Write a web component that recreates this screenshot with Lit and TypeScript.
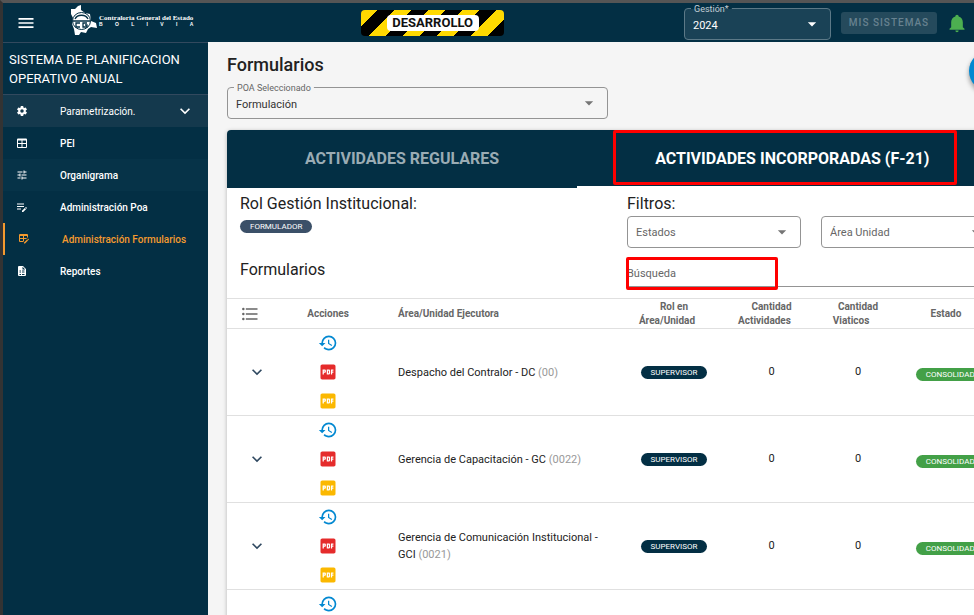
import { LitElement, html, css, svg } from "lit";
import { customElement } from "lit/decorators.js";
import { classMap } from "lit/directives/class-map.js";

const ICONS: Record<string, string> = {
  menu: "M3 6H21V8H3V6M3 11H21V13H3V11M3 16H21V18H3V16Z",
  cog: "M12,15.5A3.5,3.5 0 0,1 8.5,12A3.5,3.5 0 0,1 12,8.5A3.5,3.5 0 0,1 15.5,12A3.5,3.5 0 0,1 12,15.5M19.43,12.97C19.47,12.65 19.5,12.33 19.5,12C19.5,11.67 19.47,11.34 19.43,11L21.54,9.37C21.73,9.22 21.78,8.95 21.66,8.73L19.66,5.27C19.54,5.05 19.27,4.96 19.05,5.05L16.56,6.05C16.04,5.66 15.5,5.32 14.87,5.07L14.5,2.42C14.46,2.18 14.25,2 14,2H10C9.75,2 9.54,2.18 9.5,2.42L9.13,5.07C8.5,5.32 7.96,5.66 7.44,6.05L4.95,5.05C4.73,4.96 4.46,5.05 4.34,5.27L2.34,8.73C2.21,8.95 2.27,9.22 2.46,9.37L4.57,11C4.53,11.34 4.5,11.67 4.5,12C4.5,12.33 4.53,12.65 4.57,12.97L2.46,14.63C2.27,14.78 2.21,15.05 2.34,15.27L4.34,18.73C4.46,18.95 4.73,19.03 4.95,18.95L7.44,17.94C7.96,18.34 8.5,18.68 9.13,18.93L9.5,21.58C9.54,21.82 9.75,22 10,22H14C14.25,22 14.46,21.82 14.5,21.58L14.87,18.93C15.5,18.67 16.04,18.34 16.56,17.94L19.05,18.95C19.27,19.03 19.54,18.95 19.66,18.73L21.66,15.27C21.78,15.05 21.73,14.78 21.54,14.63L19.43,12.97Z",
  table: "M4,3H20A2,2 0 0,1 22,5V20A2,2 0 0,1 20,22H4A2,2 0 0,1 2,20V5A2,2 0 0,1 4,3M4,7V12H11V7H4M13,7V12H20V7H13M4,14V20H11V14H4M13,14V20H20V14H13Z",
  tune: "M3,17V19H9V17H3M3,5V7H13V5H3M13,21V19H21V17H13V15H11V21H13M7,9V11H3V13H7V15H9V9H7M21,13V11H11V13H21M15,9H17V7H21V5H17V3H15V9Z",
  textEdit: "M2,5H16V7H2V5M2,10H16V12H2V10M2,15H10V17H2V15M21.7,13.6L20.4,12.3A0.8,0.8 0 0,0 19.3,12.3L18.3,13.3L20.7,15.7L21.7,14.7A0.8,0.8 0 0,0 21.7,13.6M12,19.6V22H14.4L20,16.3L17.6,13.9L12,19.6Z",
  tableEdit: "M21.7,13.35L20.7,14.35L18.65,12.3L19.65,11.3C19.86,11.08 20.21,11.08 20.42,11.3L21.7,12.58C21.92,12.79 21.92,13.14 21.7,13.35M12,18.94L18.07,12.88L20.12,14.93L14.06,21H12V18.94M4,2H18A2,2 0 0,1 20,4V8.17L16.17,12H12V16.17L10.17,18H4A2,2 0 0,1 2,16V4A2,2 0 0,1 4,2M4,6V10H10V6H4M12,6V10H18V6H12M4,12V16H10V12H4Z",
  fileTable: "M14,2H6A2,2 0 0,0 4,4V20A2,2 0 0,0 6,22H18A2,2 0 0,0 20,20V8L14,2M13,3.5L18.5,9H13V3.5M7,11H10V13H7V11M12,11H17V13H12V11M7,15H10V16H7V15M12,15H17V16H12V15M7,18H10V20H7V18M12,18H17V20H12V18Z",
  chevron: "M7.41,8.58L12,13.17L16.59,8.58L18,10L12,16L6,10L7.41,8.58Z",
  list: "M7,5H21V7H7V5M7,13V11H21V13H7M4,4.5A1.5,1.5 0 0,1 5.5,6A1.5,1.5 0 0,1 4,7.5A1.5,1.5 0 0,1 2.5,6A1.5,1.5 0 0,1 4,4.5M4,10.5A1.5,1.5 0 0,1 5.5,12A1.5,1.5 0 0,1 4,13.5A1.5,1.5 0 0,1 2.5,12A1.5,1.5 0 0,1 4,10.5M7,19V17H21V19H7M4,16.5A1.5,1.5 0 0,1 5.5,18A1.5,1.5 0 0,1 4,19.5A1.5,1.5 0 0,1 2.5,18A1.5,1.5 0 0,1 4,16.5Z",
  history: "M13.5,8H12V13L16.28,15.54L17,14.33L13.5,12.25V8M13,3A9,9 0 0,0 4,12H1L4.96,16.03L9,12H6A7,7 0 0,1 13,5A7,7 0 0,1 20,12A7,7 0 0,1 13,19C11.07,19 9.32,18.21 8.06,16.94L6.64,18.36C8.27,20 10.5,21 13,21A9,9 0 0,0 22,12A9,9 0 0,0 13,3",
  pdf: "M19 3H5C3.9 3 3 3.9 3 5V19C3 20.1 3.9 21 5 21H19C20.1 21 21 20.1 21 19V5C21 3.9 20.1 3 19 3M9.5 11.5C9.5 12.3 8.8 13 8 13H7V15H5.5V9H8C8.8 9 9.5 9.7 9.5 10.5V11.5M14.5 13.5C14.5 14.3 13.8 15 13 15H10.5V9H13C13.8 9 14.5 9.7 14.5 10.5V13.5M18.5 10.5H17V11.5H18.5V13H17V15H15.5V9H18.5V10.5M12 10.5H13V13.5H12V10.5M7 10.5H8V11.5H7V10.5Z",
  bell: "M21,19V20H3V19L5,17V11C5,7.9 7.03,5.17 10,4.29C10,4.19 10,4.1 10,4A2,2 0 0,1 12,2A2,2 0 0,1 14,4C14,4.1 14,4.19 14,4.29C16.97,5.17 19,7.9 19,11V17L21,19M14,21A2,2 0 0,1 12,23A2,2 0 0,1 10,21",
  caret: "M7,10L12,15L17,10H7Z",
};

const icon = (name: string, size: number) => html`<svg
  width=${size} height=${size} viewBox="0 0 24 24" fill="currentColor" aria-hidden="true"
>${svg`<path d=${ICONS[name]}></path>`}</svg>`;

const base = css`
  *, *::before, *::after { box-sizing: border-box; }
  svg { display: block; flex: none; }
  button, select, input { font: inherit; color: inherit; margin: 0; }
  button { background: none; border: 0; padding: 0; cursor: pointer; }
`;

@customElement("select-field")
class SelectField extends LitElement {
  static properties = {
    label: { type: String },
    value: { type: String },
    dark: { type: Boolean, reflect: true },
  };
  declare label: string;
  declare value: string;
  declare dark: boolean;

  static styles = [base, css`
    :host { display: block; color: #333; --edge: #949494; --label: #666; --caret: #757575; --back: #f5f5f5; }
    :host([dark]) { color: #fff; --edge: #5c7987; --label: #c3ced4; --caret: #fff; --back: #032f44; }
    .field { position: relative; }
    select {
      appearance: none; width: 100%; height: 32px; padding: 3px 36px 0 8px; display: block;
      border: 1px solid var(--edge); border-radius: 4px; background: transparent;
      font-size: 11px; line-height: 16px;
    }
    .empty { color: #666; padding-top: 1px; }
    :host([dark]) select { background: #1a4256; }
    label {
      position: absolute; left: 7px; top: -5px; padding: 0 3px; z-index: 1;
      font-size: 9px; line-height: 12px; color: var(--label);
      background: linear-gradient(var(--back), var(--back)) center 5px / 100% 1px no-repeat;
    }
    .caret { position: absolute; right: 9px; top: 6px; color: var(--caret); pointer-events: none; }
  `];

  render() {
    return html`<div class="field">
      ${this.value ? html`<label for="s">${this.label}</label>` : ""}
      <select id="s" class=${classMap({ empty: !this.value })} aria-label=${this.label}>
        <option>${this.value || this.label}</option>
      </select>
      <span class="caret">${icon("caret", 20)}</span>
    </div>`;
  }
}

const MENU = [
  { icon: "cog", text: "Parametrización.", group: true },
  { icon: "table", text: "PEI" },
  { icon: "tune", text: "Organigrama", tint: true },
  { icon: "textEdit", text: "Administración Poa" },
  { icon: "tableEdit", text: "Administración Formularios", active: true },
  { icon: "fileTable", text: "Reportes" },
];

const ROWS = [
  { unit: "Despacho del Contralor - DC", code: "00" },
  { unit: "Gerencia de Capacitación - GC", code: "0022" },
  { unit: "Gerencia de Comunicación Institucional - GCI", code: "0021" },
  { unit: "Gerencia de Desarrollo Normativo - GDN", code: "0023" },
];

@customElement("app-root")
class AppRoot extends LitElement {
  static styles = [base, css`
    :host {
      display: flex; flex-direction: column; height: 100vh; overflow: hidden;
      font-family: Roboto, "Liberation Sans", sans-serif; font-size: 11px; line-height: 16px;
      color: #222; background: #f5f5f5;
      border-top: 3px solid #555; border-left: 3px solid #333; box-sizing: border-box;
    }
    .topbar {
      flex: none; height: 39px; display: flex; align-items: center; padding: 0 7px 0 13px;
      background: #032f44; color: #fff;
    }
    .logo { margin-left: 34px; display: flex; align-items: center; gap: 2px; margin-top: -4px; }
    .brand { display: flex; flex-direction: column; }
    .brand-name { font: bold 7px/8px "Liberation Serif", serif; white-space: nowrap; }
    .brand-land {
      display: flex; justify-content: space-between;
      font: bold 5px/5px "Liberation Sans", sans-serif;
    }
    .stage {
      margin: 0 auto; width: 143px; height: 26px; border-radius: 4px; display: grid; place-items: center;
      background: repeating-linear-gradient(135deg, #ffd900 0 12px, #000 12px 24px);
    }
    .stage b {
      background: #fff; color: #111; border-radius: 4px; width: 92px; text-align: center;
      font-size: 13px; line-height: 16px; font-weight: 700;
    }
    .tools { display: flex; align-items: center; gap: 10px; margin-left: 12px; }
    .tools select-field { width: 147px; margin-top: 3px; }
    .systems {
      height: 22px; width: 96px; border-radius: 3px; background: #254a5c; color: #688290;
      font-size: 10px; font-weight: 500; letter-spacing: 1px; white-space: nowrap;
    }
    .bell { color: #4caf50; }
    .body { flex: 1; min-height: 0; display: flex; }
    nav { flex: none; width: 205px; background: #032f44; color: #fff; }
    .system {
      margin: 0; padding: 7px 6px; height: 53px; border: solid #32495e; border-width: 1px 0;
      font-size: 13px; line-height: 19px; font-weight: 400;
    }
    nav ul { list-style: none; margin: 0; padding: 0; }
    .item {
      display: flex; align-items: center; height: 32px; padding: 0 13px; width: 100%;
      color: #fff; text-decoration: none; font-weight: 500; text-align: left; font-size: 10px;
    }
    .item span { flex: 1; padding: 2px 0 0 32px; white-space: nowrap; }
    .group { background: #14394d; font-weight: 400; }
    .tint { background: #063348; }
    .active { color: #f49a2f; border-left: 2px solid #f49a2f; }
    main { flex: 1; min-width: 0; padding: 14px 19px 0; overflow: hidden; position: relative; }
    h1 { margin: 0 0 13px; font-size: 18px; line-height: 18px; font-weight: 500; }
    .poa { width: 381px; }
    .fab {
      position: absolute; right: -35px; top: 9px; width: 40px; height: 40px; border-radius: 50%;
      background: #0288d1; box-shadow: 0 3px 5px #0006;
    }
    .card {
      margin-top: 11px; min-width: 800px; background: #fff; border-radius: 4px;
      box-shadow: 0 1px 4px #0004;
    }
    .tabs { display: flex; height: 58px; background: #032f44; border-radius: 4px 4px 0 0; }
    .tab {
      padding: 2px 78px 0; color: #9aacb4; font-size: 16px; font-weight: 700; white-space: nowrap;
      border-bottom: 2px solid transparent; position: relative;
    }
    .tab.on { color: #fff; border-color: #fff; }
    .tab.on::after, .search::after { content: ""; position: absolute; border: 3px solid #f00; border-radius: 2px; }
    .tab.on::after { inset: 0 50px 1px 36px; }
    .filters { display: grid; grid-template-columns: 1fr 1fr; padding: 6px 13px 11px; height: 110px; }
    h2 { margin: 0; font-size: 16px; line-height: 20px; font-weight: 400; }
    .role { margin-bottom: 27px; display: flex; }
    .pill {
      display: inline-block; height: 13px; border-radius: 7px; padding: 0 10px; color: #fff;
      font-size: 8px; line-height: 14px; background: #032f44; margin-top: 2px;
    }
    .pill.slate { background: #3b5068; margin-top: 6px; }
    .pill.green { background: #43a047; margin-top: 6px; }
    .pair { display: grid; grid-template-columns: 1fr 1fr; gap: 20px; padding-right: 19px; margin-top: 2px; }
    .search {
      display: flex; position: relative; margin-top: 10px; height: 29px;
      border-bottom: 1px solid #949494;
    }
    .search::after { left: -1px; top: -1px; bottom: -4px; width: 152px; pointer-events: none; }
    .search input { width: 100%; border: 0; padding: 4px 0 0; background: none; outline: none; }
    .search input::placeholder { color: #666; opacity: 1; }
    table { width: 100%; table-layout: fixed; border-collapse: collapse; }
    th, td { border-top: 1px solid #e0e0e0; padding: 0; text-align: center; }
    th { height: 29px; font-size: 10px; line-height: 14px; font-weight: 700; color: #666; }
    thead tr { height: 30px; }
    td { height: 87px; }
    .c-toggle { width: 60px; }
    .c-actions { width: 82px; }
    .c-role { width: 90px; }
    .c-acts { width: 105px; }
    .c-trips { width: 68px; }
    .c-state { width: 135px; }
    .unit { text-align: left; padding: 0 16px 0 29px; line-height: 17px; }
    .state { padding-right: 13px; }
    .sort { display: inline-block; width: 14px; }
    .code { color: #999; }
    .list { color: #666; padding-left: 13px; }
    .stack { display: flex; flex-direction: column; align-items: center; gap: 9px; }
    .toggle { display: block; margin: 0 auto; color: #2f4860; }
    .blue { color: #0288d1; } .red { color: #e52b2b; } .amber { color: #fbb800; }
  `];

  render() {
    return html`
      <header class="topbar">
        <button aria-label="Menú">${icon("menu", 20)}</button>
        <div class="logo">
          <svg width="27" height="31" viewBox="0 0 27 31" aria-hidden="true">
            <path fill="#fff" d="M1 4 5 4 8 1 11 0 11 5 15 8 20 9 21 16 26 18 27 23 21 22 18 24 16 28 11 27 9 30 5 30 4 24 2 19 3 13 1 9Z"></path>
            <ellipse cx="11.500" cy="16" rx="9" ry="8.500" fill="#fff" stroke="#032f44" stroke-width="1"></ellipse>
            <path d="M5 14a7 6 0 0 1 13 0M3 16h17M10 18H6v4h4M17 18h-4v4h4v-2h-2" fill="none" stroke="#032f44" stroke-width="1.300"></path>
          </svg>
          <div class="brand">
            <span class="brand-name">Contraloria General del Estado</span>
            <span class="brand-land">${[..."BOLIVIA"].map((c) => html`<span>${c}</span>`)}</span>
          </div>
        </div>
        <div class="stage"><b>DESARROLLO</b></div>
        <div class="tools">
          <select-field dark label="Gestión*" value="2024"></select-field>
          <button class="systems" disabled>MIS SISTEMAS</button>
          <button class="bell" aria-label="Notificaciones">${icon("bell", 20)}</button>
        </div>
      </header>
      <div class="body">
        <nav>
          <p class="system">SISTEMA DE PLANIFICACION OPERATIVO ANUAL</p>
          <ul>
            ${MENU.map((m) => html`<li>
              <a href="#" class="item ${classMap({ group: !!m.group, tint: !!m.tint, active: !!m.active })}">
                ${icon(m.icon, 12)}<span>${m.text}</span>
                ${m.group ? icon("chevron", 20) : ""}
              </a>
            </li>`)}
          </ul>
        </nav>
        <main>
          <h1>Formularios</h1>
          <select-field class="poa" label="POA Seleccionado" value="Formulación"></select-field>
          <button class="fab" aria-label="Opciones"></button>
          <section class="card">
            <div class="tabs" role="tablist">
              <button class="tab" role="tab">ACTIVIDADES REGULARES</button>
              <button class="tab on" role="tab" aria-selected="true">ACTIVIDADES INCORPORADAS (F-21)</button>
            </div>
            <div class="filters">
              <div>
                <h2>Rol Gestión Institucional:</h2>
                <div class="role"><span class="pill slate">FORMULADOR</span></div>
                <h2>Formularios</h2>
              </div>
              <div>
                <h2>Filtros:</h2>
                <div class="pair">
                  <select-field label="Estados" value=""></select-field>
                  <select-field label="Área Unidad" value=""></select-field>
                </div>
                <div class="search"><input type="text" aria-label="Búsqueda" placeholder="Búsqueda" /></div>
              </div>
            </div>
            <table>
              <colgroup>
                <col class="c-toggle" /><col class="c-actions" /><col /><col class="c-role" />
                <col class="c-acts" /><col class="c-trips" /><col class="c-state" />
              </colgroup>
              <thead>
                <tr>
                  <th class="list">${icon("list", 20)}</th>
                  <th>Acciones</th>
                  <th class="unit">Área/Unidad Ejecutora</th>
                  <th>Rol en<br />Área/Unidad<span class="sort"></span></th>
                  <th>Cantidad<br />Actividades<span class="sort"></span></th>
                  <th>Cantidad<br />Viaticos<span class="sort"></span></th>
                  <th class="state">Estado<span class="sort"></span></th>
                </tr>
              </thead>
              <tbody>
                ${ROWS.map((r) => html`<tr>
                  <td><button class="toggle" aria-label="Desplegar">${icon("chevron", 20)}</button></td>
                  <td><div class="stack">
                    <button class="blue" aria-label="Historial">${icon("history", 20)}</button>
                    <button class="red" aria-label="PDF">${icon("pdf", 20)}</button>
                    <button class="amber" aria-label="PDF de borrador">${icon("pdf", 20)}</button>
                  </div></td>
                  <td class="unit">${r.unit} <span class="code">(${r.code})</span></td>
                  <td><span class="pill">SUPERVISOR</span></td>
                  <td>0</td>
                  <td>0</td>
                  <td class="state"><span class="pill green">CONSOLIDADO</span></td>
                </tr>`)}
              </tbody>
            </table>
          </section>
        </main>
      </div>
    `;
  }
}
